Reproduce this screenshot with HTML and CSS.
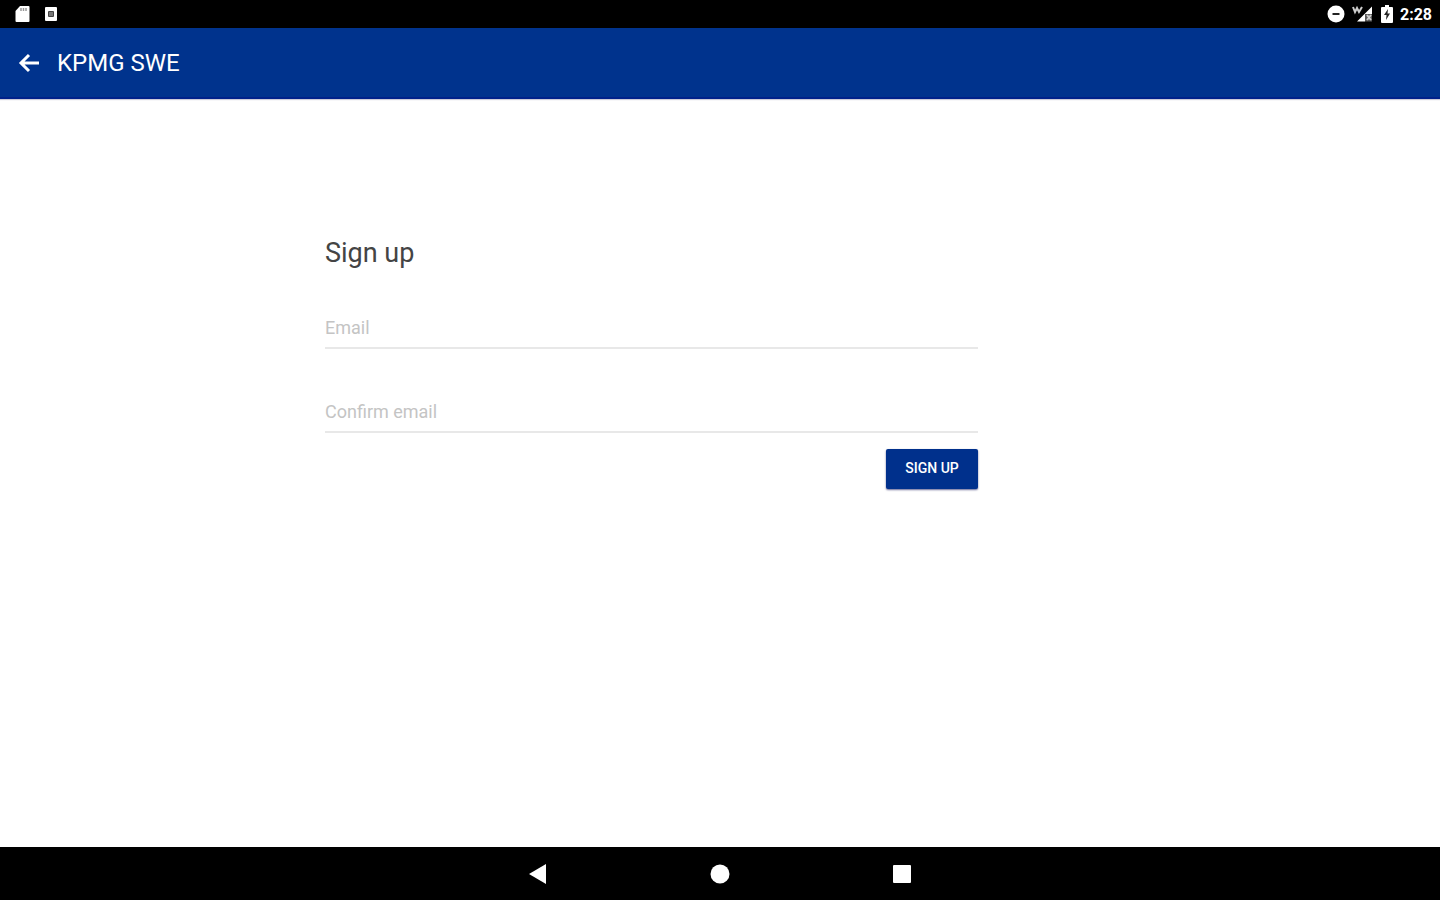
FILE: index.html
```
<!DOCTYPE html>
<html lang="en">
<head>
    <meta charset="UTF-8">
    <meta name="viewport" content="width=device-width, initial-scale=1.0">
    <title>KPMG SWE</title>
    <link rel="stylesheet" href="styles.css">
</head>
<body>
    <div class="status-bar">
        <div class="status-group status-left">
            <svg width="16" height="18" viewBox="0 0 16 18"><path fill="#fff" d="M6 1h8.500q1 0 1 1v14q0 1-1 1h-12q-1 0-1-1V6z"/><path stroke="#999" stroke-width="1.500" d="M7 3v3M9.500 3v3M12 3v3"/></svg>
            <svg width="14" height="18" viewBox="0 0 14 18"><rect x="1" y="2" width="12" height="14" rx="1" fill="#fff"/><rect x="4" y="6" width="6" height="6" rx="1" fill="#444"/><path stroke="#aaa" d="M6 7v4M8 7v4"/></svg>
        </div>
        <div class="status-group status-right">
            <svg width="18" height="18" viewBox="0 0 18 18"><circle cx="9" cy="9" r="8.500" fill="#fff"/><path stroke="#222" stroke-width="2" d="M5.500 9h7"/></svg>
            <svg width="22" height="18" viewBox="0 0 22 18"><path fill="#fff" d="M20 1.500v15H5z"/><path fill="#000" d="M13 9h9v9h-9z" opacity=".65"/><path fill="none" stroke="#ccc" stroke-width="2" d="M1 2l2 5 2-4 2 4 3-5M15 10l4 5M19 10l-4 5"/></svg>
            <svg width="12" height="18" viewBox="0 0 12 18"><path fill="#fff" d="M4 0h4v2h3q1 0 1 1v14q0 1-1 1H1q-1 0-1-1V3q0-1 1-1h3z"/><path fill="#222" d="M7 4l-4 6h2.500L5 15l4-6.500H6.500z"/></svg>
            <span class="clock">2:28</span>
        </div>
    </div>

    <header class="app-bar">
        <a href="#" class="back" aria-label="Back">
            <svg width="22" height="20" viewBox="0 0 22 20"><path fill="none" stroke="#fff" stroke-width="3" d="M11 2l-8 8 8 8M3 10h18"/></svg>
        </a>
        <h1>KPMG SWE</h1>
    </header>

    <main>
        <form class="signup-form">
            <h2>Sign up</h2>
            <input type="email" name="email" placeholder="Email" aria-label="Email">
            <input type="email" name="confirm-email" placeholder="Confirm email" aria-label="Confirm email">
            <button type="submit">SIGN UP</button>
        </form>
    </main>

    <nav class="nav-bar">
        <button type="button" aria-label="Back"><svg width="20" height="20" viewBox="0 0 20 20"><path fill="#fff" d="M1 10L18 0v20z"/></svg></button>
        <button type="button" aria-label="Home"><svg width="20" height="20" viewBox="0 0 20 20"><circle cx="10" cy="10" r="9.500" fill="#fff"/></svg></button>
        <button type="button" aria-label="Recent apps"><svg width="20" height="20" viewBox="0 0 20 20"><rect x="1" y="1" width="18" height="18" rx="1" fill="#fff"/></svg></button>
    </nav>
</body>
</html>
```
FILE: styles.css
```
* {
    box-sizing: border-box;
}

body {
    margin: 0;
    min-height: 100vh;
    display: flex;
    flex-direction: column;
    font-family: Roboto, "Liberation Sans", sans-serif;
    background-color: #fff;
}

svg {
    display: block;
}

.status-bar {
    height: 28px;
    padding: 0 8px 0 14px;
    display: flex;
    justify-content: space-between;
    align-items: center;
    background-color: #000;
    color: #fff;
}

.status-group {
    display: flex;
    align-items: center;
}

.status-left {
    gap: 14px;
}

.status-right {
    gap: 7px;
}

.clock {
    font-size: 16px;
    font-weight: 700;
}

.app-bar {
    height: 71px;
    padding: 0 18px;
    display: flex;
    align-items: center;
    gap: 17px;
    background-color: #00338d;
    border-bottom: 2px solid #00218a;
    box-shadow: 0 1px 1px rgba(0, 0, 60, 0.2);
}

.app-bar h1 {
    margin: 0;
    color: #fff;
    font-size: 24px;
    font-weight: 400;
}

main {
    flex: 1;
    display: grid;
    grid-template-columns: 325fr 653fr 462fr;
    padding-top: 138px;
}

.signup-form {
    grid-column: 2;
    display: flex;
    flex-direction: column;
}

.signup-form h2 {
    margin: 0 0 38px;
    color: #444;
    font-size: 27px;
    line-height: 32px;
    font-weight: 400;
}

.signup-form input {
    width: 100%;
    height: 42px;
    margin-bottom: 42px;
    padding: 0;
    border: none;
    border-bottom: 2px solid #e8e8e8;
    border-radius: 0;
    outline: none;
    background: none;
    color: #444;
    font-family: inherit;
    font-size: 18px;
}

.signup-form input::placeholder {
    color: #c4c4c4;
    opacity: 1;
}

.signup-form input:last-of-type {
    margin-bottom: 16px;
}

.signup-form button {
    align-self: flex-end;
    width: 92px;
    height: 40px;
    padding: 0 0 2px;
    border: none;
    border-radius: 2px;
    background-color: #00308c;
    box-shadow: 0 1px 2px rgba(0, 0, 80, 0.6);
    color: #fff;
    font-family: inherit;
    font-size: 14px;
    font-weight: 500;
    cursor: pointer;
}

.nav-bar {
    height: 53px;
    display: flex;
    justify-content: center;
    align-items: center;
    gap: 142px;
    background-color: #000;
}

.nav-bar button {
    padding: 0 10px;
    border: none;
    background: none;
    cursor: pointer;
}
```
